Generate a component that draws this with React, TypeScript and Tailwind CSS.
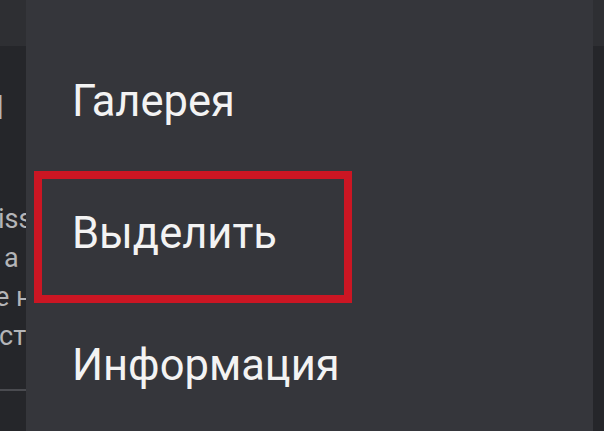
import React from "react";

// Context menu over a dimmed screen, "Выделить" marked with a red frame
const items = ["Галерея", "Выделить", "Информация"];

const App = () => {
  return (
    <div
      className="flex h-[431px] w-[604px] overflow-hidden bg-[#25262a]"
      style={{ fontFamily: "Roboto, 'Noto Sans', sans-serif" }}
    >
      {/* page behind the menu, left edge */}
      <div className="flex w-[26px] shrink-0 flex-col overflow-hidden">
        <div className="h-[46px] shrink-0 bg-[#2e2f33]" />
        <div className="flex flex-1 flex-col bg-[#25262a] text-[#b4b5b8]">
          <div className="ml-[-20px] mt-[44px] whitespace-nowrap text-[34px] leading-[34px]">
            Н
          </div>
          <div className="mt-[76px] whitespace-nowrap text-[27px] leading-[39px]">
            <div className="ml-[-2px]">iss</div>
            <div className="ml-[4px]">а</div>
            <div className="ml-[-5px]">е н</div>
            <div className="ml-[-1px]">ст</div>
          </div>
          <div className="mt-[33px] h-[2px] w-full shrink-0 bg-[#4a4b50]" />
        </div>
      </div>

      {/* menu panel */}
      <div className="flex flex-1 flex-col bg-[#35363b] pt-[36px]">
        {items.map((label, i) => (
          <div
            key={label}
            className="relative flex h-[132px] shrink-0 items-center pl-[46px] text-[43.5px] leading-none text-[#f3f3f3]"
          >
            {i === 1 && (
              <div className="absolute left-[8px] top-[3px] h-[132px] w-[318px] border-[8px] border-[#cb1623]" />
            )}
            <span className="relative">{label}</span>
          </div>
        ))}
      </div>

      {/* page behind the menu, right edge */}
      <div className="flex w-[11px] shrink-0 flex-col">
        <div className="h-[46px] bg-[#2e2f33]" />
        <div className="flex-1 bg-[#25262a]" />
      </div>
    </div>
  );
};

export default App;
